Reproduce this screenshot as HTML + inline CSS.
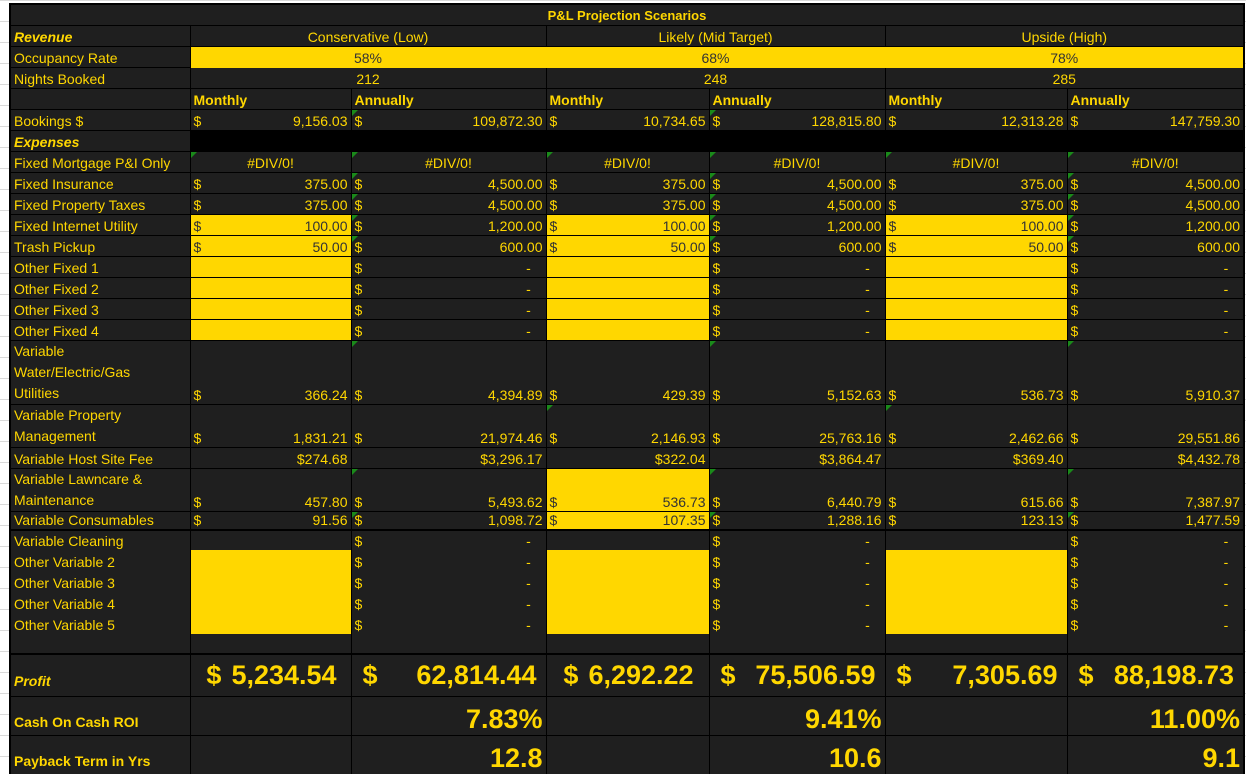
<!DOCTYPE html>
<html><head><meta charset="utf-8"><style>
html,body{margin:0;padding:0;background:#fff;width:1246px;height:774px;overflow:hidden}
body{position:relative;font-family:"Liberation Sans",Arial,sans-serif}
.grid{position:absolute;left:0;top:0;width:1246px;height:774px;
background-image:linear-gradient(#d9d9d9 1px,transparent 1px);background-size:100% 21px}
table{position:absolute;left:9px;top:3px;border-collapse:collapse;table-layout:fixed;background:#1f1f1f;color:#ffd700;font-size:14px;border:2px solid #000}
td{border:1px solid #000;padding:0 3px 1px 3px;white-space:nowrap;overflow:hidden;line-height:16px;vertical-align:bottom;position:relative}
.c{text-align:center}.r{text-align:right}
.bi{font-weight:bold;font-style:italic}.b{font-weight:bold}
.y{background:#ffd700;color:#333}
.k{background:#000}
.a{display:flex;justify-content:space-between}
.g::before{content:"";position:absolute;left:0;top:0;border-top:6px solid #1a8a1a;border-right:6px solid transparent}
.nb td{border-top:none;border-bottom:none}
.big{font-size:27px;font-weight:bold;line-height:30px}
.big .a{padding:0 6px 0 8px}
</style></head><body>
<div class="grid"></div>
<table>
<colgroup><col style="width:180px"><col style="width:161px"><col style="width:195px"><col style="width:163px"><col style="width:176px"><col style="width:182px"><col style="width:177px"></colgroup>
<tr style="height:21px"><td colspan="7" class="c b" style="font-size:13px">P&amp;L Projection Scenarios</td></tr>
<tr style="height:21px"><td class="bi">Revenue</td><td colspan="2" class="c">Conservative (Low)</td><td colspan="2" class="c">Likely (Mid Target)</td><td colspan="2" class="c">Upside (High)</td></tr>
<tr style="height:21px"><td>Occupancy Rate</td><td colspan="2" class="c y" style="border-color:#ffd700">58%</td><td colspan="2" class="c y" style="border-color:#ffd700">68%</td><td colspan="2" class="c y" style="border-color:#ffd700">78%</td></tr>
<tr style="height:21px"><td>Nights Booked</td><td colspan="2" class="c">212</td><td colspan="2" class="c">248</td><td colspan="2" class="c">285</td></tr>
<tr style="height:21px"><td></td><td class="b">Monthly</td><td class="b">Annually</td><td class="b">Monthly</td><td class="b">Annually</td><td class="b">Monthly</td><td class="b">Annually</td></tr>
<tr style="height:21px"><td>Bookings $</td><td><div class="a"><span>$</span><span>9,156.03</span></div></td><td class="g"><div class="a"><span>$</span><span>109,872.30</span></div></td><td><div class="a"><span>$</span><span>10,734.65</span></div></td><td class="g"><div class="a"><span>$</span><span>128,815.80</span></div></td><td><div class="a"><span>$</span><span>12,313.28</span></div></td><td><div class="a"><span>$</span><span>147,759.30</span></div></td></tr>
<tr style="height:21px"><td class="bi">Expenses</td><td colspan="6" class="k"></td></tr>
<tr style="height:21px"><td>Fixed Mortgage P&amp;I Only</td><td class="c g">#DIV/0!</td><td class="c g">#DIV/0!</td><td class="c g">#DIV/0!</td><td class="c g">#DIV/0!</td><td class="c g">#DIV/0!</td><td class="c g">#DIV/0!</td></tr>
<tr style="height:21px"><td>Fixed Insurance</td><td><div class="a"><span>$</span><span>375.00</span></div></td><td class="g"><div class="a"><span>$</span><span>4,500.00</span></div></td><td><div class="a"><span>$</span><span>375.00</span></div></td><td class="g"><div class="a"><span>$</span><span>4,500.00</span></div></td><td><div class="a"><span>$</span><span>375.00</span></div></td><td class="g"><div class="a"><span>$</span><span>4,500.00</span></div></td></tr>
<tr style="height:21px"><td>Fixed Property Taxes</td><td><div class="a"><span>$</span><span>375.00</span></div></td><td class="g"><div class="a"><span>$</span><span>4,500.00</span></div></td><td><div class="a"><span>$</span><span>375.00</span></div></td><td class="g"><div class="a"><span>$</span><span>4,500.00</span></div></td><td><div class="a"><span>$</span><span>375.00</span></div></td><td class="g"><div class="a"><span>$</span><span>4,500.00</span></div></td></tr>
<tr style="height:21px"><td>Fixed Internet Utility</td><td class="y"><div class="a"><span>$</span><span>100.00</span></div></td><td class="g"><div class="a"><span>$</span><span>1,200.00</span></div></td><td class="y"><div class="a"><span>$</span><span>100.00</span></div></td><td class="g"><div class="a"><span>$</span><span>1,200.00</span></div></td><td class="y"><div class="a"><span>$</span><span>100.00</span></div></td><td class="g"><div class="a"><span>$</span><span>1,200.00</span></div></td></tr>
<tr style="height:21px"><td>Trash Pickup</td><td class="y"><div class="a"><span>$</span><span>50.00</span></div></td><td class="g"><div class="a"><span>$</span><span>600.00</span></div></td><td class="y"><div class="a"><span>$</span><span>50.00</span></div></td><td class="g"><div class="a"><span>$</span><span>600.00</span></div></td><td class="y"><div class="a"><span>$</span><span>50.00</span></div></td><td class="g"><div class="a"><span>$</span><span>600.00</span></div></td></tr>
<tr style="height:21px"><td>Other Fixed 1</td><td class="y"></td><td><div class="a"><span>$</span><span>-&nbsp;&nbsp;&nbsp;</span></div></td><td class="y"></td><td><div class="a"><span>$</span><span>-&nbsp;&nbsp;&nbsp;</span></div></td><td class="y"></td><td><div class="a"><span>$</span><span>-&nbsp;&nbsp;&nbsp;</span></div></td></tr>
<tr style="height:21px"><td>Other Fixed 2</td><td class="y"></td><td><div class="a"><span>$</span><span>-&nbsp;&nbsp;&nbsp;</span></div></td><td class="y"></td><td><div class="a"><span>$</span><span>-&nbsp;&nbsp;&nbsp;</span></div></td><td class="y"></td><td><div class="a"><span>$</span><span>-&nbsp;&nbsp;&nbsp;</span></div></td></tr>
<tr style="height:21px"><td>Other Fixed 3</td><td class="y"></td><td><div class="a"><span>$</span><span>-&nbsp;&nbsp;&nbsp;</span></div></td><td class="y"></td><td><div class="a"><span>$</span><span>-&nbsp;&nbsp;&nbsp;</span></div></td><td class="y"></td><td><div class="a"><span>$</span><span>-&nbsp;&nbsp;&nbsp;</span></div></td></tr>
<tr style="height:21px"><td>Other Fixed 4</td><td class="y"></td><td><div class="a"><span>$</span><span>-&nbsp;&nbsp;&nbsp;</span></div></td><td class="y"></td><td><div class="a"><span>$</span><span>-&nbsp;&nbsp;&nbsp;</span></div></td><td class="y"></td><td><div class="a"><span>$</span><span>-&nbsp;&nbsp;&nbsp;</span></div></td></tr>
<tr style="height:63px"><td style="line-height:21px;padding-bottom:0">Variable<br>Water/Electric/Gas<br>Utilities</td><td><div class="a"><span>$</span><span>366.24</span></div></td><td class="g"><div class="a"><span>$</span><span>4,394.89</span></div></td><td><div class="a"><span>$</span><span>429.39</span></div></td><td class="g"><div class="a"><span>$</span><span>5,152.63</span></div></td><td><div class="a"><span>$</span><span>536.73</span></div></td><td class="g"><div class="a"><span>$</span><span>5,910.37</span></div></td></tr>
<tr style="height:42px"><td style="line-height:21px;padding-bottom:0">Variable Property<br>Management</td><td><div class="a"><span>$</span><span>1,831.21</span></div></td><td><div class="a"><span>$</span><span>21,974.46</span></div></td><td class="g"><div class="a"><span>$</span><span>2,146.93</span></div></td><td><div class="a"><span>$</span><span>25,763.16</span></div></td><td class="g"><div class="a"><span>$</span><span>2,462.66</span></div></td><td><div class="a"><span>$</span><span>29,551.86</span></div></td></tr>
<tr style="height:21px"><td>Variable Host Site Fee</td><td class="r">$274.68</td><td class="r">$3,296.17</td><td class="r">$322.04</td><td class="r">$3,864.47</td><td class="r">$369.40</td><td class="r">$4,432.78</td></tr>
<tr style="height:42px"><td style="line-height:21px;padding-bottom:0">Variable Lawncare &amp;<br>Maintenance</td><td><div class="a"><span>$</span><span>457.80</span></div></td><td class="g"><div class="a"><span>$</span><span>5,493.62</span></div></td><td class="y"><div class="a"><span>$</span><span>536.73</span></div></td><td class="g"><div class="a"><span>$</span><span>6,440.79</span></div></td><td><div class="a"><span>$</span><span>615.66</span></div></td><td class="g"><div class="a"><span>$</span><span>7,387.97</span></div></td></tr>
<tr style="height:19px"><td>Variable Consumables</td><td><div class="a"><span>$</span><span>91.56</span></div></td><td class="g"><div class="a"><span>$</span><span>1,098.72</span></div></td><td class="y"><div class="a"><span>$</span><span>107.35</span></div></td><td class="g"><div class="a"><span>$</span><span>1,288.16</span></div></td><td><div class="a"><span>$</span><span>123.13</span></div></td><td class="g"><div class="a"><span>$</span><span>1,477.59</span></div></td></tr>
<tr style="height:20px;border-top:2px solid #000" class="nb"><td>Variable Cleaning</td><td></td><td><div class="a"><span>$</span><span>-&nbsp;&nbsp;&nbsp;</span></div></td><td></td><td><div class="a"><span>$</span><span>-&nbsp;&nbsp;&nbsp;</span></div></td><td></td><td><div class="a"><span>$</span><span>-&nbsp;&nbsp;&nbsp;</span></div></td></tr>
<tr style="height:21px" class="nb"><td>Other Variable 2</td><td class="y"></td><td><div class="a"><span>$</span><span>-&nbsp;&nbsp;&nbsp;</span></div></td><td class="y"></td><td><div class="a"><span>$</span><span>-&nbsp;&nbsp;&nbsp;</span></div></td><td class="y"></td><td><div class="a"><span>$</span><span>-&nbsp;&nbsp;&nbsp;</span></div></td></tr>
<tr style="height:21px" class="nb"><td>Other Variable 3</td><td class="y"></td><td><div class="a"><span>$</span><span>-&nbsp;&nbsp;&nbsp;</span></div></td><td class="y"></td><td><div class="a"><span>$</span><span>-&nbsp;&nbsp;&nbsp;</span></div></td><td class="y"></td><td><div class="a"><span>$</span><span>-&nbsp;&nbsp;&nbsp;</span></div></td></tr>
<tr style="height:21px" class="nb"><td>Other Variable 4</td><td class="y"></td><td><div class="a"><span>$</span><span>-&nbsp;&nbsp;&nbsp;</span></div></td><td class="y"></td><td><div class="a"><span>$</span><span>-&nbsp;&nbsp;&nbsp;</span></div></td><td class="y"></td><td><div class="a"><span>$</span><span>-&nbsp;&nbsp;&nbsp;</span></div></td></tr>
<tr style="height:21px" class="nb"><td>Other Variable 5</td><td class="y"></td><td><div class="a"><span>$</span><span>-&nbsp;&nbsp;&nbsp;</span></div></td><td class="y"></td><td><div class="a"><span>$</span><span>-&nbsp;&nbsp;&nbsp;</span></div></td><td class="y"></td><td><div class="a"><span>$</span><span>-&nbsp;&nbsp;&nbsp;</span></div></td></tr>
<tr style="height:20px" class="nb"><td></td><td></td><td></td><td></td><td></td><td></td><td></td></tr>
<tr style="height:42px;border-top:2px solid #000"><td class="bi" style="padding-bottom:7px">Profit</td>
<td class="big" style="vertical-align:middle"><div class="a" style="justify-content:center;gap:10px"><span>$</span><span>5,234.54</span></div></td>
<td class="big" style="vertical-align:middle"><div class="a"><span>$</span><span>62,814.44</span></div></td>
<td class="big" style="vertical-align:middle"><div class="a" style="justify-content:center;gap:10px"><span>$</span><span>6,292.22</span></div></td>
<td class="big" style="vertical-align:middle"><div class="a"><span>$</span><span>75,506.59</span></div></td>
<td class="big" style="vertical-align:middle"><div class="a"><span>$</span><span>7,305.69</span></div></td>
<td class="big" style="vertical-align:middle"><div class="a"><span>$</span><span>88,198.73</span></div></td></tr>
<tr style="height:39px"><td class="b" style="padding-bottom:5px">Cash On Cash ROI</td><td></td><td class="big r">7.83%</td><td></td><td class="big r">9.41%</td><td></td><td class="big r">11.00%</td></tr>
<tr style="height:40px"><td class="b" style="padding-bottom:5px">Payback Term in Yrs</td><td></td><td class="big r">12.8</td><td></td><td class="big r">10.6</td><td></td><td class="big r">9.1</td></tr>
</table>
</body></html>
